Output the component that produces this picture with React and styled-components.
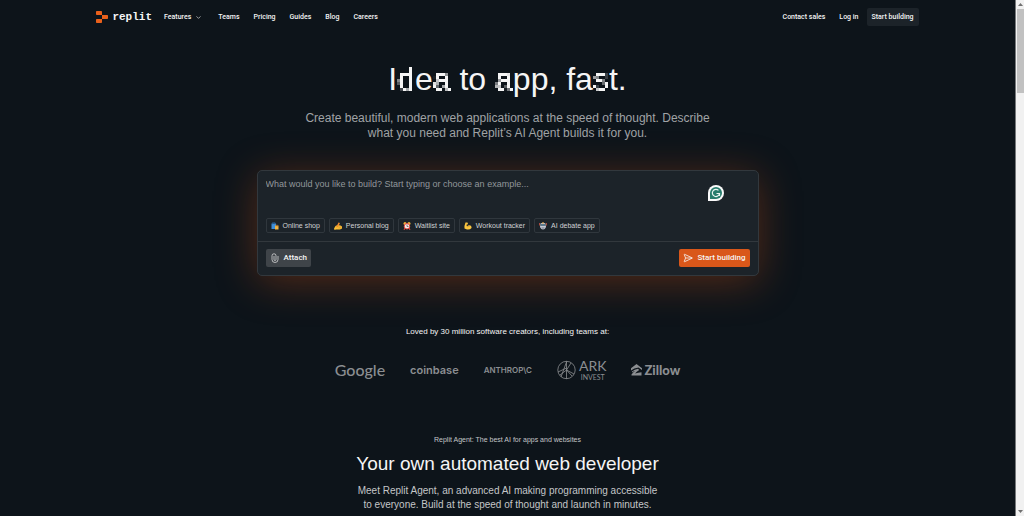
import React from "react";
import styled, { createGlobalStyle } from "styled-components";
import { ChevronDown, SendHorizontal } from "lucide-react";

const GlobalStyle = createGlobalStyle`
    * {
        box-sizing: border-box;
    }
    body {
        margin: 0;
        background-color: #0d141a;
        color: #f5f5f5;
        font-family: "Liberation Sans", Arial, sans-serif;
    }
    a {
        color: inherit;
        text-decoration: none;
    }
    button {
        font-family: inherit;
        cursor: pointer;
    }
`;
const Window = styled.div`
    display: flex;
    height: 100vh;
    overflow: hidden;
`;
const Page = styled.div`
    flex: 1;
    min-width: 0;
`;
const Header = styled.header`
    display: flex;
    align-items: center;
    justify-content: space-between;
    height: 34px;
    width: 81%;
    margin: 0 auto;
    font-family: Roboto, sans-serif;
    font-size: 7px;
    font-weight: 500;
    line-height: 10px;
`;
const Nav = styled.nav`
    display: flex;
    align-items: center;
    gap: 14px;
`;
const Brand = styled.a`
    display: flex;
    align-items: center;
    gap: 4px;
    margin-right: -2px;
    font-family: "Liberation Mono", monospace;
    font-size: 11px;
    font-weight: bold;
    line-height: 14px;
`;
const NavLink = styled.a`
    display: flex;
    align-items: center;
    gap: 4px;
    margin-right: ${props => props.$menu ? '2px' : '0'};
`;
const Account = styled.div`
    display: flex;
    align-items: center;
    gap: 14px;
`;
const HeaderButton = styled.button`
    height: 18px;
    padding: 0 5px;
    margin-left: -6px;
    border: none;
    border-radius: 2px;
    background-color: #1c2329;
    color: #f5f5f5;
    font-size: 7px;
    font-weight: 500;
`;
const Hero = styled.section`
    display: flex;
    flex-direction: column;
    align-items: center;
    padding-top: 24px;
`;
const Title = styled.h1`
    margin: 0;
    font-size: 32px;
    font-weight: normal;
    line-height: 42px;
`;
const PixelLetter = styled.span`
    display: inline-block;
    filter: url(#pixelate);
`;
const Lead = styled.p`
    max-width: 440px;
    margin: 11px 0 0;
    color: #a0a3a6;
    font-size: 12px;
    line-height: 15px;
    text-align: center;
`;
const Prompt = styled.form`
    position: relative;
    display: flex;
    flex-direction: column;
    width: 502px;
    max-width: 96%;
    margin-top: 29px;
    border: 1px solid #32383d;
    border-radius: 5px;
    background-color: #1c2329;
    box-shadow: 0 6px 40px rgba(190, 76, 20, 0.4);
`;
const PromptInput = styled.textarea`
    height: 41px;
    margin: 6px 8px 0;
    padding: 0;
    border: none;
    outline: none;
    resize: none;
    background: transparent;
    color: #f5f5f5;
    font-family: inherit;
    font-size: 9px;
    line-height: 14px;

    &::placeholder {
        color: #92979b;
        opacity: 1;
    }
`;
const Examples = styled.div`
    display: flex;
    gap: 4px;
    padding: 0 8px 8px;
`;
const Example = styled.button`
    display: flex;
    align-items: center;
    gap: 4px;
    height: 15px;
    padding: 0 4px;
    border: 1px solid #30373d;
    border-radius: 2px;
    background: transparent;
    color: #d0d2d4;
    font-size: 7px;
    line-height: 10px;
    white-space: nowrap;
`;
const Actions = styled.div`
    display: flex;
    justify-content: space-between;
    padding: 7px 8px 8px;
    border-top: 1px solid #32383d;
`;
const ActionButton = styled.button`
    display: flex;
    align-items: center;
    gap: 4px;
    height: 18px;
    padding: 0 4px;
    border: none;
    border-radius: 2px;
    background-color: ${props => props.$primary ? '#d9571a' : '#3f4449'};
    color: #f5f5f5;
    font-family: Roboto, sans-serif;
    font-size: 8px;
    font-weight: 500;
    line-height: 10px;
`;
const Assistant = styled.div`
    position: absolute;
    top: 14px;
    right: 34px;
    width: 16px;
    height: 16px;
`;
const Teams = styled.section`
    padding-top: 50px;
    text-align: center;
`;
const TeamsTitle = styled.p`
    margin: 0;
    font-size: 8px;
    line-height: 12px;
`;
const Logos = styled.div`
    display: flex;
    align-items: center;
    justify-content: center;
    gap: 25px;
    height: 22px;
    margin-top: 21px;
    color: #8b8e91;
`;
const Wordmark = styled.span`
    display: flex;
    align-items: center;
    gap: 2px;
    font-family: ${props => props.$font}, sans-serif;
    font-size: ${props => props.$size};
    font-weight: ${props => props.$weight};
    line-height: 16px;
`;
const Ark = styled.span`
    display: flex;
    align-items: center;
    gap: 3px;
    font-family: Lato, sans-serif;
`;
const ArkName = styled.span`
    display: flex;
    flex-direction: column;
    font-size: 14px;
    line-height: 14px;
`;
const ArkSub = styled.small`
    font-size: 7px;
    line-height: 8px;
`;
const Agent = styled.section`
    display: flex;
    flex-direction: column;
    align-items: center;
    padding-top: 54px;
    text-align: center;
`;
const Eyebrow = styled.p`
    margin: 0;
    color: #c4c6c8;
    font-size: 7px;
    line-height: 10px;
`;
const Heading = styled.h2`
    margin: 6px 0 0;
    font-size: 19px;
    font-weight: normal;
    line-height: 26px;
`;
const Description = styled.p`
    max-width: 304px;
    margin: 7px 0 0;
    color: #c4c6c8;
    font-size: 10px;
    line-height: 14px;
`;
const Scrollbar = styled.div`
    display: flex;
    flex-direction: column;
    align-items: center;
    justify-content: space-between;
    width: 9px;
    padding: 3px 1px;
    border-left: 1px solid #77797b;
    background-color: #f1f1f1;
`;
const Thumb = styled.div`
    width: 7px;
    height: 84px;
    margin-top: 3px;
    margin-bottom: auto;
    background-color: #c1c1c1;
`;
const Arrow = styled.svg`
    width: 5px;
    height: 3px;
    fill: #707070;
`;

const ReplitMark = () => (
    <svg width="12" height="14" viewBox="0 0 12 14" fill="#e9601b">
        <path d="M.8 1H5.2Q6 1 6 1.8V5H.8Q0 5 0 4.2V1.8Q0 1 .8 1ZM6 5H11.2Q12 5 12 5.8V8.2Q12 9 11.2 9H6ZM.8 9H6V12.2Q6 13 5.2 13H.8Q0 13 0 12.2V9.8Q0 9 .8 9Z" />
    </svg>
);

const BagsIcon = () => (
    <svg width="8" height="8" viewBox="0 0 16 16">
        <path d="M1 3H10V14H1Z" fill="#3e8ed8" />
        <path d="M3 5V1H8V5" fill="none" stroke="#2867a4" strokeWidth="1" />
        <path d="M8 7H15V15H8Z" fill="#f2b544" />
        <path d="M10 9V6H13V9" fill="none" stroke="#a9682a" />
    </svg>
);

const WritingIcon = () => (
    <svg width="8" height="8" viewBox="0 0 16 16">
        <path d="M0 13L3 8L7 6L13 7L16 9V13L12 15H4L1 16Z" fill="#f8bd35" />
        <path d="M4 11L9 1L12 2L8 10Z" fill="#f08a2d" />
        <path d="M9 10H15M9 12H14" stroke="#d98e22" />
    </svg>
);

const ClockIcon = () => (
    <svg width="8" height="8" viewBox="0 0 16 16">
        <circle cx="4" cy="3" r="3" fill="#f1b13b" />
        <circle cx="12" cy="3" r="3" fill="#f1b13b" />
        <path d="M4 12L2 16M12 12L14 16" stroke="#e2483f" strokeWidth="2" />
        <circle cx="8" cy="8.500" r="5.500" fill="#f5eeee" stroke="#e2483f" strokeWidth="2" />
        <path d="M8 5V9H11" fill="none" stroke="#45312f" strokeWidth="1.200" />
    </svg>
);

const MuscleIcon = () => (
    <svg width="8" height="8" viewBox="0 0 16 16">
        <path d="M3 1H7L8 4L5 6L6 9Q9 5 13 7Q16 9 15 12Q12 16 6 15L1 13Q0 8 3 1Z" fill="#fbc740" />
        <path d="M7 10Q9 8 11 9M4 5L6 4" fill="none" stroke="#d38a20" />
    </svg>
);

const RobotIcon = () => (
    <svg width="8" height="8" viewBox="0 0 16 16">
        <path d="M1 2V7M15 2V7" stroke="#d85a4a" strokeWidth="1.500" />
        <path d="M3 3Q8 0 13 3L14 10Q12 15 8 15Q4 15 2 10Z" fill="#c5c9d3" />
        <path d="M3 4H13V8H3Z" fill="#50586a" />
        <path d="M5 6H7M9 6H11" stroke="#79d9f2" strokeWidth="2" />
        <path d="M5 11H11V13H5Z" fill="#6d7282" />
        <path d="M6 2H10" stroke="#eda945" strokeWidth="2" />
    </svg>
);

const ClipIcon = () => (
    <svg width="10" height="10" viewBox="0 0 20 20" fill="none" stroke="currentColor" strokeWidth="1.300">
        <path d="M16 6V13A6 6 0 0 1 4 13V5.500A4 4 0 0 1 12 5.500V13A2 2 0 0 1 8 13V6" />
    </svg>
);

const GrammarlyIcon = () => (
    <svg width="16" height="16" viewBox="0 0 16 16" fill="none">
        <path d="M0 16V8A8 8 0 1 1 8 16Z" fill="#fafafa" />
        <path d="M2 14V8A6 6 0 1 1 8 14Z" fill="#277c6c" />
        <path d="M10.500 5.400A3.600 3.600 0 1 0 11.500 8.500H8.500M11.500 8.500V11" stroke="#e9f5f1" strokeWidth="1.200" />
    </svg>
);

const ArkIcon = () => (
    <svg width="19" height="20" viewBox="0 0 19 20" fill="none" stroke="currentColor" strokeWidth="0.800">
        <circle cx="9.500" cy="10" r="8.700" />
        <path d="M9.500 1V19M9.500 2L4 17M9.500 10L17 14M9.500 10L14 3M1 12L9.500 8M3 15L9.500 10L15 16" />
    </svg>
);

const ZillowIcon = () => (
    <svg width="11" height="12" viewBox="0 0 11 12" fill="currentColor">
        <path d="M5.500 0L11 4.200V6L7.500 3.600Q3 4.300 0 6.500V4.200Z" />
        <path d="M1 7.500Q3.500 5.500 7 4.800L8.200 6Q5.500 7.500 4 9.600Q7 8.400 10.500 8.200V11.500H.5V10.400Q2 8.200 4 7Q2.500 7.200 1 8.400Z" />
    </svg>
);

const examples = [
    { label: "Online shop", Icon: BagsIcon },
    { label: "Personal blog", Icon: WritingIcon },
    { label: "Waitlist site", Icon: ClockIcon },
    { label: "Workout tracker", Icon: MuscleIcon },
    { label: "AI debate app", Icon: RobotIcon },
];

// Turns a letter into 3px blocks
const PixelFilter = () => (
    <svg width="0" height="0" style={{ position: "absolute" }} aria-hidden="true">
        <filter id="pixelate" filterUnits="userSpaceOnUse" x="0" y="0" width="60" height="60" colorInterpolationFilters="sRGB">
            <feFlood x="1" y="1" width="1" height="1" floodColor="#fff" result="dot" />
            <feOffset in="dot" dx="0" dy="0" x="0" y="0" width="3" height="3" result="cell" />
            <feTile in="cell" x="0" y="0" width="60" height="60" result="grid" />
            <feComposite in="SourceGraphic" in2="grid" operator="in" x="0" y="0" width="60" height="60" result="dots" />
            <feMorphology in="dots" operator="dilate" radius="1" x="0" y="0" width="60" height="60" result="blocks" />
            <feComponentTransfer in="blocks" x="0" y="0" width="60" height="60">
                <feFuncA type="table" tableValues="0 0.4 1 1" />
            </feComponentTransfer>
        </filter>
    </svg>
);

export default function App() {
    return (
        <Window>
            <GlobalStyle />
            <PixelFilter />
            <Page>
                <Header>
                    <Nav>
                        <Brand href="#"><ReplitMark />replit</Brand>
                        <NavLink href="#features" $menu>Features <ChevronDown size={7} /></NavLink>
                        <NavLink href="#teams">Teams</NavLink>
                        <NavLink href="#pricing">Pricing</NavLink>
                        <NavLink href="#guides">Guides</NavLink>
                        <NavLink href="#blog">Blog</NavLink>
                        <NavLink href="#careers">Careers</NavLink>
                    </Nav>
                    <Account>
                        <NavLink href="#sales">Contact sales</NavLink>
                        <NavLink href="#login">Log in</NavLink>
                        <HeaderButton type="button">Start building</HeaderButton>
                    </Account>
                </Header>
                <Hero>
                    <Title>
                        I<PixelLetter>d</PixelLetter>e<PixelLetter>a</PixelLetter> to <PixelLetter>a</PixelLetter>pp, fa<PixelLetter>s</PixelLetter>t.
                    </Title>
                    <Lead>
                        Create beautiful, modern web applications at the speed of thought. Describe<br />
                        what you need and Replit’s AI Agent builds it for you.
                    </Lead>
                    <Prompt onSubmit={(e) => e.preventDefault()}>
                        <PromptInput
                            aria-label="What would you like to build?"
                            placeholder="What would you like to build? Start typing or choose an example..."
                        />
                        <Examples>
                            {examples.map(({ label, Icon }) => (
                                <Example type="button" key={label}><Icon />{label}</Example>
                            ))}
                        </Examples>
                        <Actions>
                            <ActionButton type="button"><ClipIcon />Attach</ActionButton>
                            <ActionButton type="submit" $primary><SendHorizontal size={10} />Start building</ActionButton>
                        </Actions>
                        <Assistant><GrammarlyIcon /></Assistant>
                    </Prompt>
                </Hero>
                <Teams>
                    <TeamsTitle>Loved by 30 million software creators, including teams at:</TeamsTitle>
                    <Logos>
                        <Wordmark $font="Lato" $size="16px" $weight="500">Google</Wordmark>
                        <Wordmark $font="Inter" $size="11px" $weight="600">coinbase</Wordmark>
                        <Wordmark $font="Inter" $size="8px" $weight="600">ANTHROP\C</Wordmark>
                        <Ark>
                            <ArkIcon />
                            <ArkName>ARK<ArkSub>INVEST</ArkSub></ArkName>
                        </Ark>
                        <Wordmark $font="Lato" $size="13px" $weight="900"><ZillowIcon />Zillow</Wordmark>
                    </Logos>
                </Teams>
                <Agent>
                    <Eyebrow>Replit Agent: The best AI for apps and websites</Eyebrow>
                    <Heading>Your own automated web developer</Heading>
                    <Description>
                        Meet Replit Agent, an advanced AI making programming accessible
                        to everyone. Build at the speed of thought and launch in minutes.
                    </Description>
                </Agent>
            </Page>
            <Scrollbar>
                <Arrow viewBox="0 0 5 3"><path d="M0 3L2.500 0L5 3Z" /></Arrow>
                <Thumb />
                <Arrow viewBox="0 0 5 3"><path d="M0 0L2.500 3L5 0Z" /></Arrow>
            </Scrollbar>
        </Window>
    );
}
